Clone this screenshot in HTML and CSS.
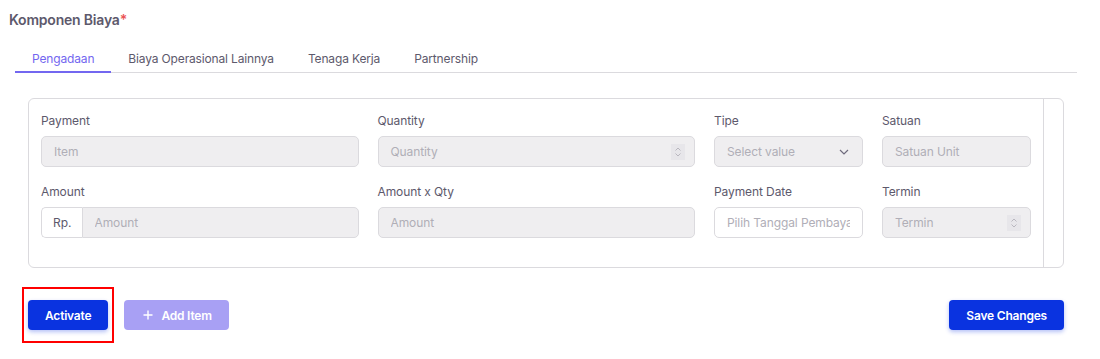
FILE: index.html
```html
<!DOCTYPE html>
<html lang="id">
<head>
    <meta charset="UTF-8">
    <meta name="viewport" content="width=device-width, initial-scale=1.0">
    <title>Komponen Biaya</title>
    <link rel="stylesheet" href="styles.css">
</head>
<body>
    <div class="page">
        <h4 class="section-title">Komponen Biaya<span class="req">*</span></h4>

        <ul class="tabs">
            <li class="tab active">Pengadaan</li>
            <li class="tab">Biaya Operasional Lainnya</li>
            <li class="tab">Tenaga Kerja</li>
            <li class="tab">Partnership</li>
        </ul>

        <div class="item-card">
            <div class="item-grid">
                <div class="field">
                    <label>Payment</label>
                    <input class="input" type="text" placeholder="Item" disabled>
                </div>
                <div class="field">
                    <label>Quantity</label>
                    <div class="input with-icon">
                        <span class="ph">Quantity</span>
                        <span class="spin">
                            <svg width="8" height="12" viewBox="0 0 8 12"><path d="M1.5 4.5 4 2l2.5 2.5M1.5 7.5 4 10l2.5-2.5" fill="none" stroke="#b9b7bf" stroke-width="1"/></svg>
                        </span>
                    </div>
                </div>
                <div class="field">
                    <label>Tipe</label>
                    <div class="input with-icon">
                        <span class="ph">Select value</span>
                        <svg class="chev" width="10" height="6" viewBox="0 0 10 6"><path d="M1 1l4 4 4-4" fill="none" stroke="#6f6b7d" stroke-width="1.2"/></svg>
                    </div>
                </div>
                <div class="field">
                    <label>Satuan</label>
                    <input class="input" type="text" placeholder="Satuan Unit" disabled>
                </div>

                <div class="field">
                    <label>Amount</label>
                    <div class="input-group">
                        <span class="addon">Rp.</span>
                        <input class="input" type="text" placeholder="Amount" disabled>
                    </div>
                </div>
                <div class="field">
                    <label>Amount x Qty</label>
                    <input class="input" type="text" placeholder="Amount" disabled>
                </div>
                <div class="field">
                    <label>Payment Date</label>
                    <input class="input enabled" type="text" placeholder="Pilih Tanggal Pembayaran">
                </div>
                <div class="field">
                    <label>Termin</label>
                    <div class="input with-icon">
                        <span class="ph">Termin</span>
                        <span class="spin">
                            <svg width="8" height="12" viewBox="0 0 8 12"><path d="M1.5 4.5 4 2l2.5 2.5M1.5 7.5 4 10l2.5-2.5" fill="none" stroke="#b9b7bf" stroke-width="1"/></svg>
                        </span>
                    </div>
                </div>
            </div>
            <div class="gutter"></div>
        </div>

        <div class="actions">
            <div class="actions-left">
                <span class="highlight">
                    <button class="btn btn-primary">Activate</button>
                </span>
                <button class="btn btn-light">
                    <svg width="10" height="10" viewBox="0 0 10 10"><path d="M5 0.5v9M0.5 5h9" stroke="#fff" stroke-width="1.4"/></svg>
                    Add Item
                </button>
            </div>
            <button class="btn btn-primary">Save Changes</button>
        </div>
    </div>
</body>
</html>
```

FILE: styles.css
```css
* {
    margin: 0;
    padding: 0;
    box-sizing: border-box;
    font-family: 'Inter', 'Noto Sans', sans-serif;
}

body {
    background: #fff;
    color: #5d596c;
}

.page {
    padding: 10px 23px 0 9px;
}

.section-title {
    font-size: 14px;
    font-weight: 600;
    color: #5d596c;
    line-height: 20px;
    letter-spacing: -0.2px;
}

.req {
    color: #ea5455;
}

.tabs {
    list-style: none;
    display: flex;
    margin: 21px 0 0 6px;
    border-bottom: 1px solid #dbdade;
}

.tab {
    font-size: 12px;
    color: #5d596c;
    padding: 0 17px 5px 17px;
    line-height: 16px;
    letter-spacing: -0.15px;
}

.tab.active {
    color: #7367f0;
    box-shadow: inset 0 -2px 0 #7367f0;
    margin-bottom: -1px;
    padding-bottom: 6px;
}

.item-card {
    display: flex;
    margin: 25px 13px 0 19px;
    height: 170px;
    border: 1px solid #dbdade;
    border-radius: 6px;
}

.item-grid {
    flex: 1;
    display: grid;
    grid-template-columns: 1fr 1fr 149px 149px;
    column-gap: 19px;
    row-gap: 17px;
    padding: 14px 12px 0 12px;
    align-content: start;
}

.gutter {
    width: 20px;
    border-left: 1px solid #dbdade;
}

.field label {
    display: block;
    font-size: 12px;
    line-height: 16px;
    color: #5d596c;
    margin-bottom: 7px;
    letter-spacing: -0.1px;
}

.input {
    display: block;
    width: 100%;
    height: 31px;
    border: 1px solid #dbdade;
    border-radius: 5px;
    background: #efeef0;
    padding: 0 12px;
    font-size: 12px;
    color: #5d596c;
    outline: none;
}

.input::placeholder,
.ph {
    color: #b0aeb7;
    letter-spacing: -0.1px;
}

.input.enabled {
    background: #fff;
}

.with-icon {
    display: flex;
    align-items: center;
    justify-content: space-between;
}

.spin {
    display: flex;
    align-items: center;
    justify-content: center;
    width: 14px;
    height: 16px;
    background: #e7e6ea;
    margin-right: -3px;
}

.chev {
    margin-right: 1px;
}

.input-group {
    display: flex;
}

.addon {
    display: flex;
    align-items: center;
    height: 31px;
    padding: 0 10px 0 11px;
    border: 1px solid #dbdade;
    border-right: none;
    border-radius: 5px 0 0 5px;
    font-size: 12px;
    color: #5d596c;
}

.input-group .input {
    border-radius: 0 5px 5px 0;
}

.actions {
    display: flex;
    justify-content: space-between;
    align-items: center;
    margin: 19px 13px 0 13px;
}

.actions-left {
    display: flex;
    align-items: center;
    gap: 10px;
}

.highlight {
    display: block;
    border: 2px solid #ff0000;
    padding: 11px 4px 11px 4px;
}

.btn {
    display: flex;
    align-items: center;
    gap: 8px;
    height: 30px;
    border: none;
    border-radius: 4px;
    font-size: 12px;
    font-weight: 600;
    color: #fff;
    letter-spacing: -0.2px;
}

.btn-primary {
    background: #0a33e0;
    padding: 0 17px;
    box-shadow: 0 2px 4px rgba(10, 51, 224, 0.3);
}

.btn-light {
    background: #a8a0f4;
    padding: 0 17px 0 19px;
}
```
